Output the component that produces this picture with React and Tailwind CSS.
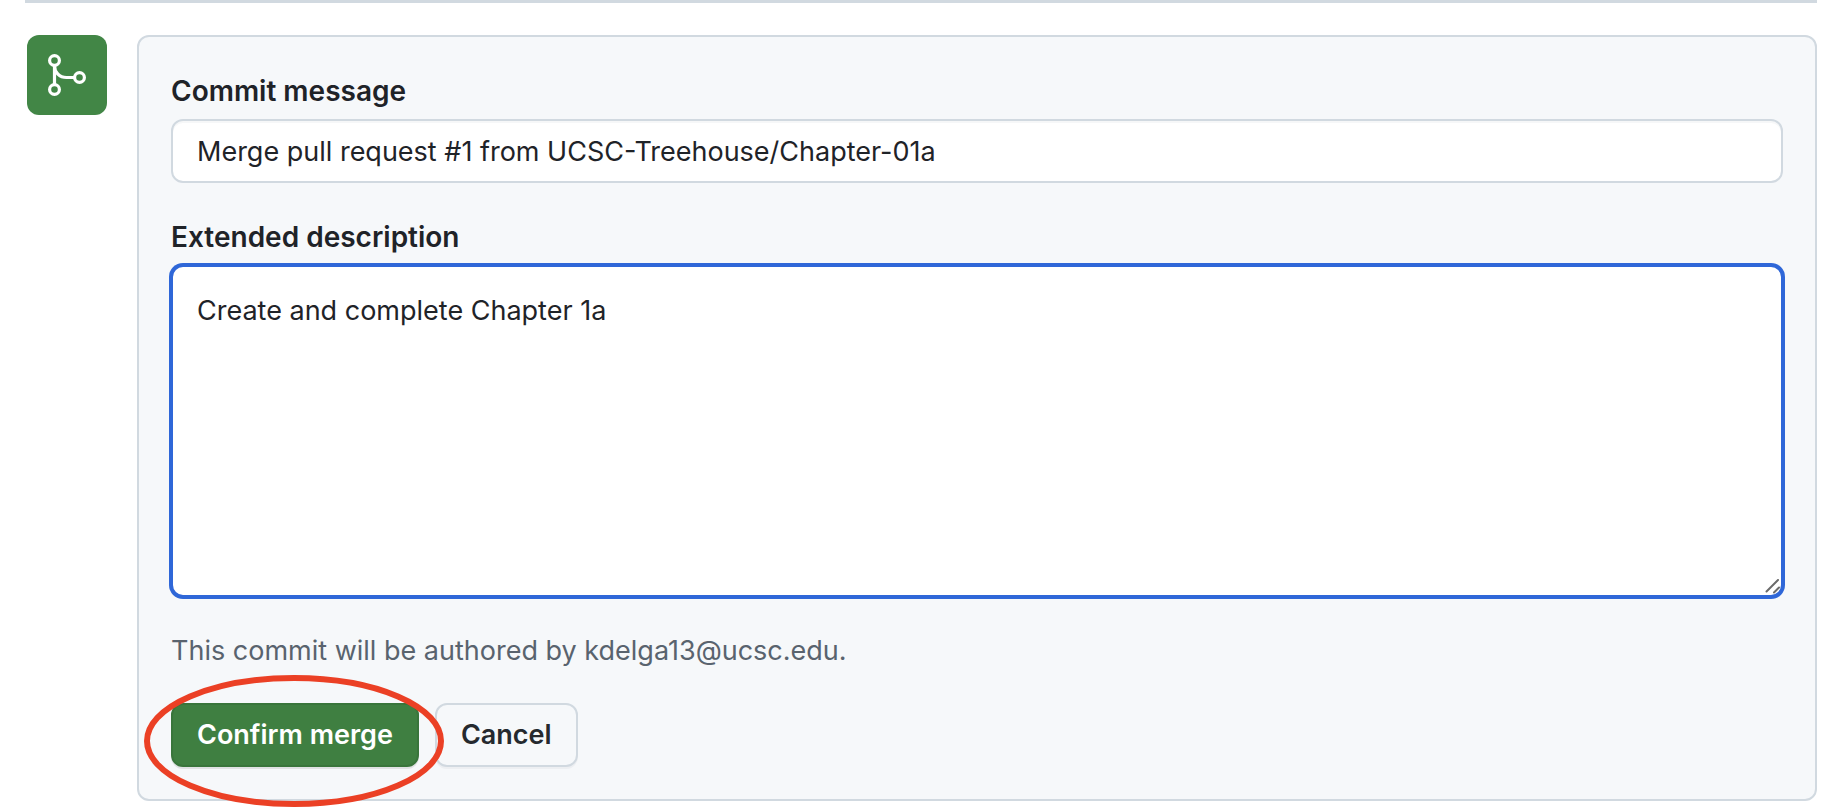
import React from "react";

function MergeIcon() {
  return (
    <svg
      viewBox="0 0 48 48"
      className="size-12"
      fill="none"
      stroke="currentColor"
      strokeWidth="3.2"
      aria-hidden="true"
    >
      <circle cx="11.5" cy="9.5" r="4.9" />
      <circle cx="11.5" cy="38.5" r="4.9" />
      <circle cx="36.5" cy="26.5" r="4.9" />
      <path d="M11.5 14.5v19M11.5 14.5c0 7 5 12 12 12h8" />
    </svg>
  );
}

export default function App() {
  return (
    <main className="bg-white pr-4 pl-[25px] pb-[10px] font-[Inter,'Liberation_Sans',sans-serif] text-[27px] leading-[44px] text-[#1f2328]">
      <div className="h-[3px] bg-[#d1d9e0]" />
      <div className="mt-8 flex items-start gap-[30px] pl-[2px]">
        <div className="flex size-20 shrink-0 items-center justify-center rounded-xl bg-[#428646] text-white">
          <MergeIcon />
        </div>
        <form
          className="min-w-0 flex-1 rounded-xl border-2 border-[#d1d9e0] bg-[#f6f8fa] p-8"
          onSubmit={(event) => event.preventDefault()}
        >
          <label
            htmlFor="commit-message"
            className="mb-[6px] block text-[28px] leading-[44px] font-semibold"
          >
            Commit message
          </label>
          <input
            id="commit-message"
            type="text"
            defaultValue="Merge pull request #1 from UCSC-Treehouse/Chapter-01a"
            className="block h-16 w-full rounded-xl border-2 border-[#d1d9e0] bg-white px-6 shadow-[inset_0_2px_0_rgba(208,215,222,0.2)] outline-none"
          />

          <label
            htmlFor="description"
            className="mt-8 mb-[6px] block text-[28px] leading-[44px] font-semibold"
          >
            Extended description
          </label>
          <div className="relative">
            <textarea
              id="description"
              defaultValue="Create and complete Chapter 1a"
              className="block h-[332px] w-full resize-none rounded-xl border-2 border-[#2f67d8] bg-white p-6 leading-10 ring-2 ring-[#2f67d8] outline-none"
            />
            <svg
              viewBox="0 0 16 16"
              className="pointer-events-none absolute right-[2px] bottom-[2px] size-4"
              stroke="#6b6b6b"
              strokeWidth="2"
              strokeLinecap="round"
              aria-hidden="true"
            >
              <path d="M1.5 12.5l11.5-11.5M9 13.5l5-5" />
            </svg>
          </div>

          <p className="mt-8 text-[#59636e]">
            This commit will be authored by kdelga13@ucsc.edu.
          </p>

          <div className="mt-[30px] flex gap-4">
            <div className="relative">
              <button
                type="submit"
                className="h-16 rounded-xl border-2 border-[#39753b] bg-[#3f7f41] px-6 font-semibold text-white shadow-[0_2px_0_rgba(31,35,40,0.1)]"
              >
                Confirm merge
              </button>
              <svg
                viewBox="0 0 300 132"
                className="pointer-events-none absolute -top-7 -left-[27px] z-10 h-[132px] w-[300px]"
                fill="none"
                stroke="#eb4025"
                strokeWidth="6"
                aria-hidden="true"
              >
                <ellipse cx="150" cy="66" rx="147" ry="63" />
              </svg>
            </div>
            <button
              type="button"
              className="h-16 rounded-xl border-2 border-[#d1d9e0] bg-[#f6f8fa] px-6 font-semibold text-[#25292e] shadow-[0_2px_0_rgba(31,35,40,0.04)]"
            >
              Cancel
            </button>
          </div>
        </form>
      </div>
    </main>
  );
}
